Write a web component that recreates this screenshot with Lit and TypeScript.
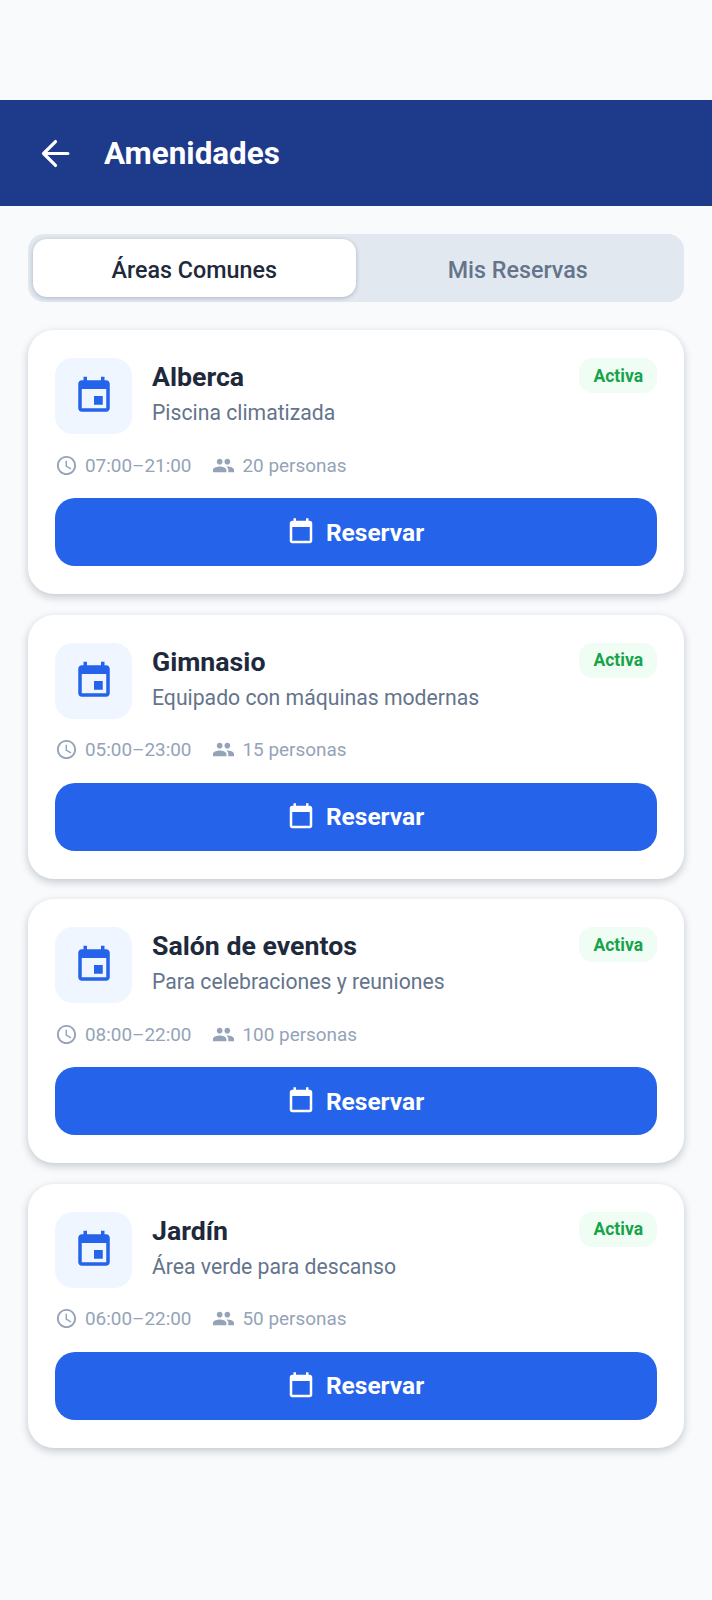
import { LitElement, html, css, svg } from "lit";
import { customElement } from "lit/decorators.js";

const areas = [
  { name: "Alberca", desc: "Piscina climatizada", hours: "07:00–21:00", cap: "20 personas" },
  { name: "Gimnasio", desc: "Equipado con máquinas modernas", hours: "05:00–23:00", cap: "15 personas" },
  { name: "Salón de eventos", desc: "Para celebraciones y reuniones", hours: "08:00–22:00", cap: "100 personas" },
  { name: "Jardín", desc: "Área verde para descanso", hours: "06:00–22:00", cap: "50 personas" },
];

const eventIcon = svg`<path fill="currentColor" d="M17 12h-5v5h5v-5zM16 1v2H8V1H6v2H5c-1.11 0-1.99.9-1.99 2L3 19c0 1.1.89 2 2 2h14c1.1 0 2-.9 2-2V5c0-1.1-.9-2-2-2h-1V1h-2zm3 18H5V8h14v11z"/>`;
const calOutline = svg`<path fill="currentColor" d="M19 3h-1V1h-2v2H8V1H6v2H5c-1.11 0-1.99.9-1.99 2L3 19c0 1.1.89 2 2 2h14c1.1 0 2-.9 2-2V5c0-1.1-.9-2-2-2zm0 16H5V8h14v11z"/>`;
const clock = svg`<path fill="currentColor" d="M11.99 2C6.47 2 2 6.48 2 12s4.47 10 9.99 10C17.52 22 22 17.52 22 12S17.52 2 11.99 2zM12 20c-4.42 0-8-3.58-8-8s3.58-8 8-8 8 3.58 8 8-3.58 8-8 8zm.5-13H11v6l5.25 3.15.75-1.23-4.5-2.67V7z"/>`;
const people = svg`<path fill="currentColor" d="M16 11c1.66 0 2.99-1.34 2.99-3S17.66 5 16 5s-3 1.34-3 3 1.34 3 3 3zm-8 0c1.66 0 2.99-1.34 2.99-3S9.66 5 8 5 5 6.34 5 8s1.34 3 3 3zm0 2c-2.33 0-7 1.17-7 3.5V19h14v-2.5C15 14.17 10.33 13 8 13zm8 0c-.29 0-.62.02-.97.05 1.16.84 1.97 1.97 1.97 3.45V19h6v-2.5c0-2.33-4.67-3.5-7-3.5z"/>`;
const arrow = svg`<path fill="none" stroke="currentColor" stroke-width="2.2" stroke-linecap="round" stroke-linejoin="round" d="M20.5 12H4M12 3.8 3.8 12l8.2 8.2"/>`;

@customElement("app-root")
export class AppRoot extends LitElement {
  static styles = css`
    :host {
      display: block;
      width: 712px;
      height: 1600px;
      background: #f8fafc;
      font-family: Roboto, "Noto Sans", sans-serif;
      overflow: hidden;
    }
    .status { height: 100px; }
    .bar {
      height: 106px;
      background: #1e3a8a;
      display: flex;
      align-items: center;
      padding: 0 28px 0 38px;
      gap: 31px;
      color: #fff;
      box-sizing: border-box;
    }
    .bar svg { width: 35px; height: 35px; display: block; }
    .bar h1 { margin: 0; font-size: 31.4px; font-weight: 700; letter-spacing: 0; }
    .content {
      padding: 28px 28px 0;
      display: flex;
      flex-direction: column;
    }
    .tabs {
      display: flex;
      height: 68px;
      box-sizing: border-box;
      padding: 5px;
      background: #e2e8f0;
      border-radius: 16px;
      margin-bottom: 28px;
    }
    .tab {
      flex: 1;
      display: flex;
      align-items: center;
      justify-content: center;
      box-sizing: border-box;
      padding-top: 3px;
      font-size: 23.3px;
      font-weight: 500;
      color: #64748b;
      border-radius: 14px;
    }
    .tab.on {
      background: #fff;
      color: #1e293b;
      margin-right: 1px;
      box-shadow: 0 1px 4px rgba(15, 23, 42, 0.25);
    }
    .cards { display: flex; flex-direction: column; gap: 20.5px; }
    .card {
      height: 264px;
      box-sizing: border-box;
      background: #fff;
      border-radius: 26px;
      padding: 28px 27px 28px;
      box-shadow: 0 3px 8px rgba(15, 23, 42, 0.22);
      display: flex;
      flex-direction: column;
    }
    .top { display: flex; align-items: flex-start; gap: 20px; }
    .tile {
      width: 77px;
      height: 76px;
      border-radius: 18px;
      background: #eff6ff;
      color: #2563eb;
      display: flex;
      align-items: center;
      justify-content: center;
      flex: none;
    }
    .tile svg { width: 42px; height: 42px; display: block; }
    .info { flex: 1; min-width: 0; padding-top: 3px; }
    .name { font-size: 26.7px; font-weight: 700; color: #1e293b; line-height: 32px; }
    .desc { font-size: 21.2px; color: #64748b; line-height: 28px; margin-top: 6px; }
    .badge {
      background: #f0fdf4;
      color: #16a34a;
      font-size: 17.5px;
      font-weight: 700;
      height: 35px;
      padding: 0 14px;
      border-radius: 14px;
      display: flex;
      align-items: center;
    }
    .meta {
      display: flex;
      align-items: center;
      margin-top: 17px;
      height: 28px;
      color: #94a3b8;
      font-size: 18.9px;
    }
    .meta svg { width: 23px; height: 23px; display: block; margin-right: 7px; flex: none; }
    .meta span { margin-right: 21px; }
    .btn {
      margin-top: auto;
      height: 68px;
      background: #2563eb;
      border-radius: 20px;
      color: #fff;
      display: flex;
      align-items: center;
      justify-content: center;
      gap: 10px;
      padding-right: 2px;
      box-sizing: border-box;
      font-size: 24.5px;
      font-weight: 700;
    }
    .btn svg { width: 30px; height: 30px; display: block; }
  `;

  render() {
    return html`
      <div class="status"></div>
      <div class="bar">
        <svg viewBox="0 0 24 24">${arrow}</svg>
        <h1>Amenidades</h1>
      </div>
      <div class="content">
        <div class="tabs">
          <div class="tab on">Áreas Comunes</div>
          <div class="tab">Mis Reservas</div>
        </div>
        <div class="cards">
          ${areas.map(
            (a) => html`
              <div class="card">
                <div class="top">
                  <div class="tile"><svg viewBox="0 0 24 24">${eventIcon}</svg></div>
                  <div class="info">
                    <div class="name">${a.name}</div>
                    <div class="desc">${a.desc}</div>
                  </div>
                  <div class="badge">Activa</div>
                </div>
                <div class="meta">
                  <svg viewBox="0 0 24 24">${clock}</svg><span>${a.hours}</span>
                  <svg viewBox="0 0 24 24">${people}</svg><span>${a.cap}</span>
                </div>
                <div class="btn"><svg viewBox="0 0 24 24">${calOutline}</svg>Reservar</div>
              </div>
            `
          )}
        </div>
      </div>
    `;
  }
}
